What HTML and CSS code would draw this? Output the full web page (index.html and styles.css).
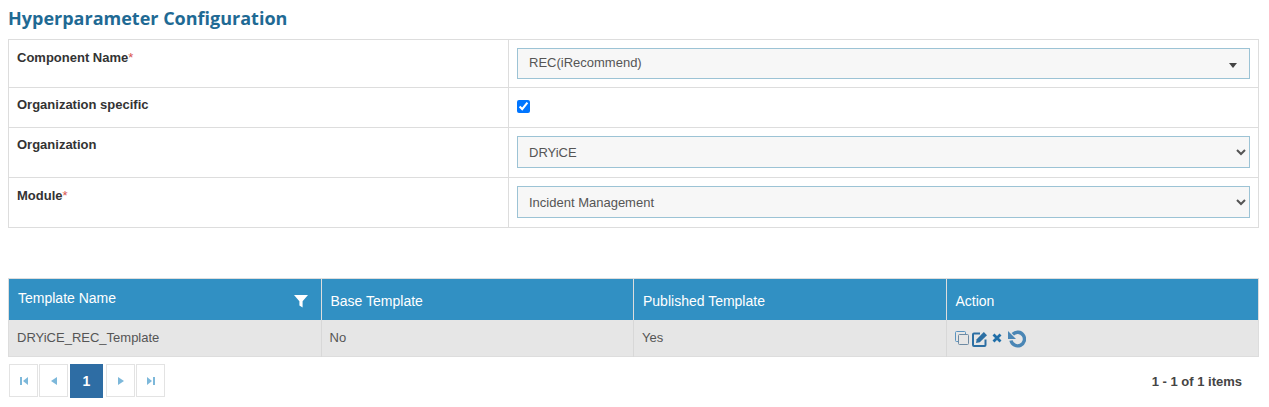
FILE: index.html
```html
<!DOCTYPE html>
<html lang="en">
  <head>
    <meta charset="UTF-8" />
    <title>Hyperparameter Configuration</title>
    <link rel="stylesheet" href="styles.css">
  </head>
  <body>
    <h1 class="page-title">Hyperparameter Configuration</h1>
    <table class="form-table">
      <tr class="row-component">
        <td class="label-cell"><label>Component Name<span class="req">*</span></label></td>
        <td>
          <div class="combo">
            <span>REC(iRecommend)</span>
            <span class="combo-caret"></span>
          </div>
        </td>
      </tr>
      <tr class="row-check">
        <td class="label-cell"><label>Organization specific</label></td>
        <td><input class="check" type="checkbox" checked></td>
      </tr>
      <tr class="row-org">
        <td class="label-cell"><label>Organization</label></td>
        <td>
          <select class="field">
            <option>DRYiCE</option>
          </select>
        </td>
      </tr>
      <tr class="row-module">
        <td class="label-cell"><label>Module<span class="req">*</span></label></td>
        <td>
          <select class="field">
            <option>Incident Management</option>
          </select>
        </td>
      </tr>
    </table>

    <table class="grid">
      <thead>
        <tr>
          <th class="col-name">
            <div class="th-filter">
              <span>Template Name</span>
              <svg class="filter-icon" width="14" height="14" viewBox="0 0 14 14">
                <path d="M0 1h14L8.6 7.2V13.4L5.4 11.4V7.2z" fill="#fff" />
              </svg>
            </div>
          </th>
          <th class="col-base">Base Template</th>
          <th class="col-pub">Published Template</th>
          <th>Action</th>
        </tr>
      </thead>
      <tbody>
        <tr>
          <td>DRYiCE_REC_Template</td>
          <td>No</td>
          <td>Yes</td>
          <td>
            <div class="actions">
              <svg class="icon-copy" width="14" height="14" viewBox="0 0 14 14" fill="none" stroke-width="1">
                <path d="M3.5 10.5H1.5a1 1 0 0 1-1-1V1.5a1 1 0 0 1 1-1h8a1 1 0 0 1 1 1v2" stroke="#5b94c0" />
                <rect x="3.5" y="3.5" width="10" height="10" rx="1" stroke="#6d8aa3" />
              </svg>
              <svg class="icon-edit" width="16" height="16" viewBox="0 0 16 16" fill="none">
                <path d="M8 2.5H2a1 1 0 0 0-1 1V14a1 1 0 0 0 1 1h10.500a1 1 0 0 0 1-1V8.500" stroke="#2c6fa3" stroke-width="2" />
                <path d="M4 12l.7-3.800L11.800 1l3.200 3.200L7.800 11.300z" fill="#2c6fa3" />
              </svg>
              <svg class="icon-del" width="10" height="10" viewBox="0 0 10 10">
                <path d="M1.500 1.500l7 7M8.500 1.500l-7 7" stroke="#1f6ea8" stroke-width="2.800" />
              </svg>
              <svg class="icon-undo" width="19" height="18" viewBox="0 0 19 18" fill="none">
                <path d="M5.800 4.300A6.800 6.800 0 1 1 4 10.500" stroke="#4a86b5" stroke-width="3.400" />
                <path d="M1 1v8h8z" fill="#4a86b5" />
              </svg>
            </div>
          </td>
        </tr>
      </tbody>
    </table>

    <div class="pager">
      <div class="pager-buttons">
        <a class="page-btn">
          <svg width="8" height="8" viewBox="0 0 8 8"><path d="M0 0h2v8H0zM8 0v8L3 4z" fill="#7db8da" /></svg>
        </a>
        <a class="page-btn">
          <svg width="6" height="8" viewBox="0 0 6 8"><path d="M6 0v8L0 4z" fill="#7db8da" /></svg>
        </a>
        <a class="page-btn current">1</a>
        <a class="page-btn">
          <svg width="6" height="8" viewBox="0 0 6 8"><path d="M0 0v8l6-4z" fill="#7db8da" /></svg>
        </a>
        <a class="page-btn">
          <svg width="8" height="8" viewBox="0 0 8 8"><path d="M0 0v8l5-4zM6 0h2v8H6z" fill="#7db8da" /></svg>
        </a>
      </div>
      <span class="pager-info">1 - 1 of 1 items</span>
    </div>
  </body>
</html>
```

FILE: styles.css
```css
body {
  font-family: "Liberation Sans", Arial, sans-serif;
  font-size: 13px;
  color: #333;
  background: #fff;
  margin: 0;
  padding: 0 10px 0 8px;
}
.page-title {
  font-family: "Open Sans", sans-serif;
  font-size: 18px;
  font-weight: 700;
  line-height: 24px;
  color: #1f6a94;
  margin: 0;
  padding: 6px 0 9px;
}
.form-table {
  width: 100%;
  border-collapse: collapse;
  table-layout: fixed;
}
.form-table td {
  border: 1px solid #ddd;
  padding: 8px;
  vertical-align: top;
}
.label-cell {
  width: 483px;
}
.form-table label {
  font-size: 13px;
  font-weight: bold;
  line-height: 20px;
  color: #333;
  display: block;
}
.req {
  color: #d9534f;
  font-weight: normal;
}
.row-component {
  height: 48px;
}
.row-check {
  height: 40px;
}
.row-check label {
  margin-top: -1px;
}
.row-org {
  height: 50px;
}
.row-org label {
  margin-top: -1px;
}
.row-module {
  height: 50px;
}
.combo {
  height: 31px;
  box-sizing: border-box;
  border: 1px solid #9cc3d5;
  background: #f7f7f7;
  color: #555;
  font-size: 13px;
  padding: 0 11px 2px;
  display: flex;
  align-items: center;
  justify-content: space-between;
}
.combo-caret {
  width: 0;
  height: 0;
  border-left: 4px solid transparent;
  border-right: 4px solid transparent;
  border-top: 5px solid #444;
  margin: 5px 1px 0 0;
}
.check {
  display: block;
  width: 13px;
  height: 13px;
  margin: 4px 0 0;
}
.field {
  display: block;
  width: 100%;
  height: 32px;
  border: 1px solid #9cc3d5;
  border-radius: 0;
  background-color: #f7f7f7;
  color: #555;
  font-family: "Liberation Sans", Arial, sans-serif;
  font-size: 13px;
  padding: 0 7px;
}
.grid {
  width: 100%;
  border-collapse: collapse;
  table-layout: fixed;
  margin-top: 50px;
  border: 1px solid #ddd;
}
.grid th {
  background: #3190c3;
  color: #fff;
  font-size: 14px;
  font-weight: normal;
  text-align: left;
  height: 41px;
  padding: 4px 9px 0;
  box-sizing: border-box;
  border-left: 1px solid #ddd;
  vertical-align: middle;
}
.grid th:first-child {
  border-left: none;
}
.col-name,
.col-base,
.col-pub {
  width: 312.5px;
}
.th-filter {
  display: flex;
  justify-content: space-between;
  align-items: center;
  margin-top: -6px;
}
.filter-icon {
  margin: 5px 4px 0 0;
}
.grid td {
  background: #e6e6e6;
  color: #555;
  font-size: 13px;
  height: 37px;
  padding: 0 8px;
  box-sizing: border-box;
  border-left: 1px solid #d8d8d8;
}
.grid td:first-child {
  border-left: none;
}
.actions {
  display: flex;
  align-items: center;
  gap: 3px;
  padding-top: 2px;
}
.icon-copy {
  margin-top: -2px;
}
.icon-del {
  margin: -1px 0 0 1px;
}
.icon-undo {
  margin-left: 2px;
}
.pager {
  display: flex;
  justify-content: space-between;
  align-items: center;
  margin-top: 7px;
}
.pager-buttons {
  display: flex;
  align-items: flex-start;
  gap: 1px;
  margin-left: 1px;
}
.page-btn {
  width: 29px;
  height: 33px;
  box-sizing: border-box;
  border: 1px solid #e3e3e3;
  display: flex;
  align-items: center;
  justify-content: center;
}
.page-btn.current {
  width: 33px;
  height: 34px;
  background: #2e6da4;
  border-color: #2e6da4;
  color: #fff;
  font-size: 14px;
  font-weight: bold;
  margin: 0 2px 0 1px;
}
.pager-info {
  font-size: 13px;
  font-weight: bold;
  color: #444;
  margin-right: 17px;
}
```
